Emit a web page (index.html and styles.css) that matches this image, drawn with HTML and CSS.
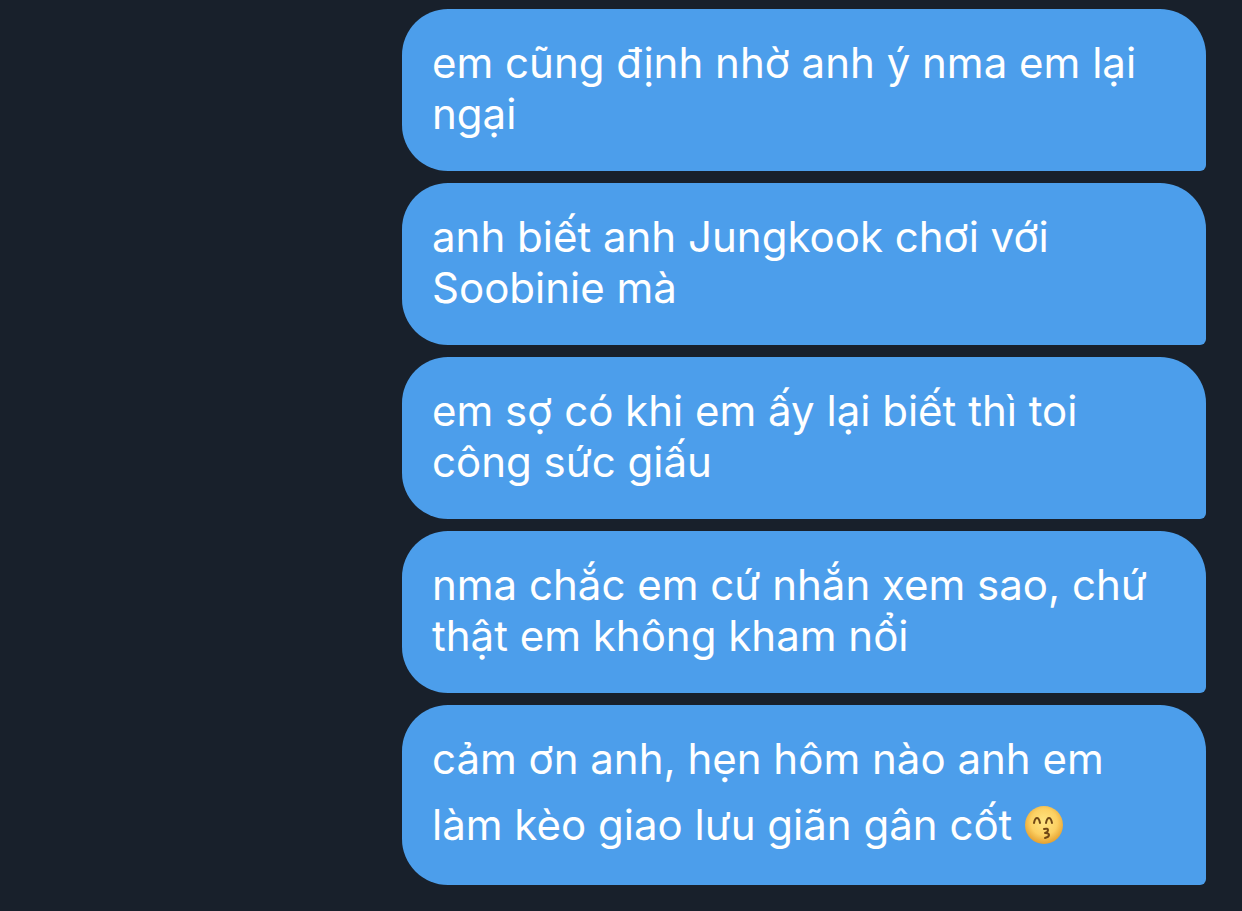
FILE: index.html
```html
<!DOCTYPE html>
<html lang="vi">
<head>
  <meta charset="UTF-8">
  <meta name="viewport" content="width=device-width, initial-scale=1.0">
  <title>Messages</title>
  <link rel="stylesheet" href="styles.css">
</head>
<body>
  <main class="chat">
    <div class="bubble">em cũng định nhờ anh ý nma em lại ngại</div>
    <div class="bubble">anh biết anh Jungkook chơi với Soobinie mà</div>
    <div class="bubble">em sợ có khi em ấy lại biết thì toi công sức giấu</div>
    <div class="bubble">nma chắc em cứ nhắn xem sao, chứ thật em không kham nổi</div>
    <div class="bubble">cảm ơn anh, hẹn hôm nào anh em làm kèo giao lưu giãn gân cốt
      <svg class="emoji" viewBox="0 0 40 40" role="img" aria-label="kissing face with smiling eyes">
        <defs>
          <radialGradient id="face" cx="50%" cy="42%" r="58%">
            <stop offset="0" stop-color="#ffe583"/>
            <stop offset="0.6" stop-color="#fcd062"/>
            <stop offset="1" stop-color="#e5a02f"/>
          </radialGradient>
        </defs>
        <circle cx="20" cy="20" r="19" fill="url(#face)"/>
        <g fill="none" stroke="#704715" stroke-width="2" stroke-linecap="round" stroke-linejoin="round">
          <path d="M10 18q1-5 3-5t3 5M22 18q1-5 3-5t3 5"/>
          <path d="M20 24q4-1 4 1t-3 3q4 0 4 2t-4 3"/>
        </g>
      </svg>
    </div>
  </main>
</body>
</html>
```
FILE: styles.css
```css
body {
  margin: 0;
  background: #18202b;
  font-family: Inter, "Noto Sans", sans-serif;
}

.chat {
  display: flex;
  flex-direction: column;
  align-items: flex-end;
  gap: 12px;
  padding: 9px 36px 26px;
}

.bubble {
  width: 100%;
  max-width: 804px;
  box-sizing: border-box;
  padding: 28px 30px 32px;
  border-radius: 46px 46px 6px 46px;
  background: #4c9eeb;
  color: #fff;
  font-size: 42px;
  line-height: 51px;
}

/* the emoji makes its line taller than the plain ones */
.emoji {
  width: 40px;
  height: 40px;
  margin: 21px 0 8px;
  vertical-align: -13px;
}
```
